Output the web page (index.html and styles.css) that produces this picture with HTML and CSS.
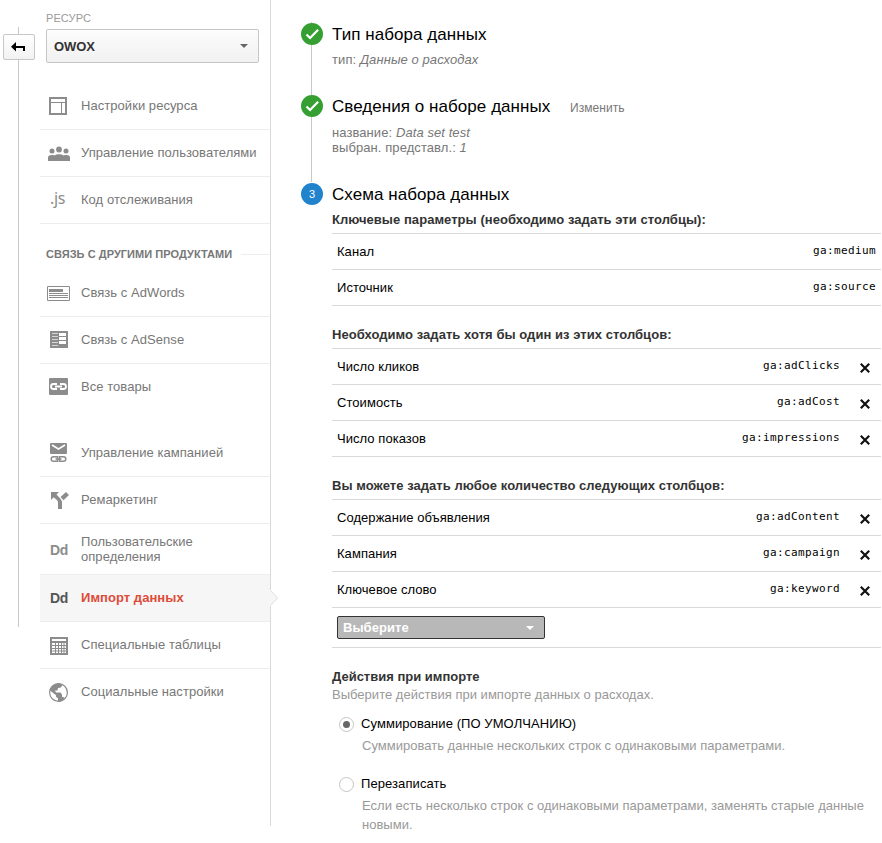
FILE: index.html
```html
<!DOCTYPE html>
<html lang="ru">
<head>
<meta charset="utf-8">
<title>Импорт данных</title>
<link rel="stylesheet" href="styles.css">
</head>
<body>
<div class="page">
  <div class="rail">
    <button class="back" aria-label="Назад"><svg width="14" height="10" viewBox="0 0 14 10"><path d="M0 4.700 5 0v4h9v5h-2V6H5v3.400z" fill="#000"/></svg></button>
  </div>
  <nav class="sidebar">
    <div class="label">РЕСУРС</div>
    <div class="picker"><span>OWOX</span><i class="caret"></i></div>
    <ul class="menu first">
      <li><span class="icon"><svg width="24" height="20" viewBox="0 0 24 20"><path d="M3 2h16v16H3z" fill="none" stroke="#8c8c8c" stroke-width="2"/><path d="M4 6.500h14M14.500 7v10" stroke="#8c8c8c" fill="none"/></svg></span><span>Настройки ресурса</span></li>
      <li><span class="icon"><svg width="24" height="20" viewBox="0 0 24 20" fill="#8c8c8c"><circle cx="12" cy="6.500" r="2.900"/><circle cx="5" cy="8" r="2.500"/><circle cx="19" cy="8" r="2.500"/><path d="M1 18v-3.500c0-2.500 4-3 6.500-2C10 10.800 14 10.800 16.700 12.500c2.500-1 6.300-.5 6.300 2V18z"/></svg></span><span>Управление пользователями</span></li>
      <li><span class="icon js">.js</span><span>Код отслеживания</span></li>
    </ul>
    <div class="section"><span>СВЯЗЬ С ДРУГИМИ ПРОДУКТАМИ</span></div>
    <ul class="menu">
      <li><span class="icon"><svg width="24" height="20" viewBox="0 0 24 20"><path d="M.5 3.500h22v14H.5z" fill="none" stroke="#8c8c8c"/><path d="M2 6h14v3H2zM2 10h19v1H2zM2 12h19v1H2zM2 14h19v1H2z" fill="#8c8c8c"/></svg></span><span>Связь с AdWords</span></li>
      <li><span class="icon"><svg width="24" height="20" viewBox="0 0 24 20"><path d="M3 1h18v17H3z" fill="#8c8c8c"/><path d="M12 3h7v3h-7zM12 7h7v3h-7zM12 11h7v3h-7z" fill="#fff"/><path d="M5 3.500h6M5 6.500h6M5 9.500h6M5 12.500h6M5 15.500h6" stroke="#d5d5d5"/></svg></span><span>Связь с AdSense</span></li>
      <li class="last"><span class="icon"><svg width="24" height="20" viewBox="0 0 24 20"><rect x="2" y="1" width="19" height="17" rx="1" fill="#8c8c8c"/><path d="M10 7H6.500a2.500 2.500 0 0 0 0 5H10M13 7h3.500a2.500 2.500 0 0 1 0 5H13M8 9.500h7" fill="none" stroke="#fff" stroke-width="1.800"/></svg></span><span>Все товары</span></li>
    </ul>
    <ul class="menu tools">
      <li><span class="icon"><svg width="24" height="20" viewBox="0 0 24 20"><rect x="3" y="0" width="17" height="11" rx="1" fill="#8c8c8c"/><path d="m5 2 6.500 4L18 2" fill="none" stroke="#fff" stroke-width="1.500"/><path d="M10.500 13.700H6.500a2.300 2.300 0 0 0 0 4.600h4zM12.500 13.700h4a2.300 2.300 0 0 1 0 4.600h-4zM8.500 16h6" fill="none" stroke="#8c8c8c" stroke-width="1.500"/></svg></span><span>Управление кампанией</span></li>
      <li><span class="icon"><svg width="24" height="20" viewBox="0 0 24 20"><path d="M4 2h8L9.500 4.500 12.300 7.500C14 9.200 15 10.500 15 12.500V19h-4v-6.200c0-1.300-.4-2-1.400-3L6.700 7.200 4 10zM13.500 7 19 2l3 3-5.500 5.200z" fill="#8c8c8c"/></svg></span><span>Ремаркетинг</span></li>
      <li class="two"><span class="icon dd">Dd</span><span>Пользовательские<br>определения</span></li>
      <li class="active"><span class="icon dd">Dd</span><span>Импорт данных</span><svg class="pointer" width="9" height="16" viewBox="0 0 9 16"><path d="M0 0h1v1l7 7-7 7v1H0z" fill="#f6f6f6"/><path d="m.8.8 6.700 7.200-6.700 7.200" fill="none" stroke="#ddd"/></svg></li>
      <li><span class="icon"><svg width="24" height="20" viewBox="0 0 24 20"><path d="M3 2h18v18H3z" fill="#8c8c8c"/><path d="M5 4h14v2H5zM5 8h3v2H5zM9 8h2v2H9zM12 8h2v2h-2zM15 8h1.500v2H15zM17.500 8H19v2h-1.500zM5 11h3v2H5zM9 11h2v2H9zM12 11h2v2h-2zM15 11h1.500v2H15zM17.500 11H19v2h-1.500zM5 14h3v1.500H5zM9 14h2v1.500H9zM12 14h2v1.500h-2zM15 14h1.500v1.500H15zM17.500 14H19v1.500h-1.500zM5 16.500h3V18H5zM9 16.500h2V18H9zM12 16.500h2V18h-2zM15 16.500h1.500V18H15zM17.500 16.500H19V18h-1.500z" fill="#fff"/></svg></span><span>Специальные таблицы</span></li>
      <li class="last"><span class="icon"><svg width="24" height="20" viewBox="0 0 24 20"><circle cx="11.500" cy="10.500" r="8.900" fill="none" stroke="#8c8c8c" stroke-width="1.200"/><path d="M3 8.500C4 4 8 1.300 13 1.500l2.500 1.300L14 5.500l-3 .5-.5 2.500H8l1 2h4.500l1.500 2v2.200l2.500.8-1.500 2.800c-2 1.500-4 1.900-5 1.700V16.500L9 14.800v-1.500z" fill="#8c8c8c"/></svg></span><span>Социальные настройки</span></li>
    </ul>
  </nav>
  <main class="content">
    <section class="step">
      <div class="track"><span class="badge done"><svg width="22" height="22" viewBox="0 0 22 22"><path d="m5.500 11.500 3.600 3.500 8-8.200" fill="none" stroke="#fff" stroke-width="2.200"/></svg></span></div>
      <div class="body s1"><h2>Тип набора данных</h2><p class="info">тип: <em>Данные о расходах</em></p></div>
    </section>
    <section class="step">
      <div class="track"><span class="badge done"><svg width="22" height="22" viewBox="0 0 22 22"><path d="m5.500 11.500 3.600 3.500 8-8.200" fill="none" stroke="#fff" stroke-width="2.200"/></svg></span></div>
      <div class="body s2"><h2>Сведения о наборе данных <a>Изменить</a></h2><p class="info">название: <em>Data set test</em><br>выбран. представл.: <em>1</em></p></div>
    </section>
    <section class="step current">
      <div class="track"><span class="badge">3</span></div>
      <div class="body">
        <h2>Схема набора данных</h2>
        <h3 class="key">Ключевые параметры (необходимо задать эти столбцы):</h3>
        <div class="table">
          <div class="row"><span>Канал</span><code>ga:medium</code></div>
          <div class="row"><span>Источник</span><code>ga:source</code></div>
        </div>
        <h3>Необходимо задать хотя бы один из этих столбцов:</h3>
        <div class="table">
          <div class="row"><span>Число кликов</span><code>ga:adClicks</code><svg class="x" width="10" height="10" viewBox="0 0 10 10"><path d="m.8.8 8.400 8.400M9.200.8.8 9.200"/></svg></div>
          <div class="row"><span>Стоимость</span><code>ga:adCost</code><svg class="x" width="10" height="10" viewBox="0 0 10 10"><path d="m.8.8 8.400 8.400M9.200.8.8 9.200"/></svg></div>
          <div class="row"><span>Число показов</span><code>ga:impressions</code><svg class="x" width="10" height="10" viewBox="0 0 10 10"><path d="m.8.8 8.400 8.400M9.200.8.8 9.200"/></svg></div>
        </div>
        <h3>Вы можете задать любое количество следующих столбцов:</h3>
        <div class="table">
          <div class="row"><span>Содержание объявления</span><code>ga:adContent</code><svg class="x" width="10" height="10" viewBox="0 0 10 10"><path d="m.8.8 8.400 8.400M9.200.8.8 9.200"/></svg></div>
          <div class="row"><span>Кампания</span><code>ga:campaign</code><svg class="x" width="10" height="10" viewBox="0 0 10 10"><path d="m.8.8 8.400 8.400M9.200.8.8 9.200"/></svg></div>
          <div class="row"><span>Ключевое слово</span><code>ga:keyword</code><svg class="x" width="10" height="10" viewBox="0 0 10 10"><path d="m.8.8 8.400 8.400M9.200.8.8 9.200"/></svg></div>
          <div class="row choose"><div class="select"><span>Выберите</span><i class="caret"></i></div></div>
        </div>
        <h3 class="import">Действия при импорте</h3>
        <p class="hint">Выберите действия при импорте данных о расходах.</p>
        <div class="option"><span class="radio on"></span><div><div class="name">Суммирование (ПО УМОЛЧАНИЮ)</div><p>Суммировать данные нескольких строк с одинаковыми параметрами.</p></div></div>
        <div class="option"><span class="radio"></span><div><div class="name">Перезаписать</div><p>Если есть несколько строк с одинаковыми параметрами, заменять старые данные новыми.</p></div></div>
      </div>
    </section>
  </main>
</div>
</body>
</html>
```
FILE: styles.css
```css
* { box-sizing: border-box; }
body { margin: 0; background: #fff; font: 13px/15px "Liberation Sans", Arial, sans-serif; letter-spacing: .05px; color: #000; overflow: hidden; }
h2, h3, p, ul { margin: 0; padding: 0; }
.page { display: flex; align-items: flex-start; height: 843px; }

.rail { width: 40px; flex: none; height: 600px; margin-top: 27px; padding: 7px 0 0 3px; background: linear-gradient(#c8c8c8, #c8c8c8) 18px 0 / 1px 100% no-repeat; }
.back { display: flex; align-items: center; justify-content: center; width: 32px; height: 26px; padding: 0 2px 0 0; border: 1px solid #c6c6c6; border-radius: 2px; background: linear-gradient(#fff, #f2f2f2); }

.sidebar { width: 231px; flex: none; height: 826px; padding-top: 11px; border-right: 1px solid #d9d9d9; color: #777; }
.label { margin-left: 6px; font-size: 11px; height: 18px; line-height: 15px; letter-spacing: .1px; color: #999; }
.picker { display: flex; align-items: center; justify-content: space-between; width: 213px; height: 34px; margin-left: 6px; padding: 0 10px 0 7px; border: 1px solid #c6c6c6; border-radius: 2px; background: linear-gradient(#fcfcfc, #f1f1f1); color: #333; font-weight: bold; }
.picker span { letter-spacing: -.1px; }
.caret { width: 0; height: 0; border: 4px solid transparent; border-top-color: #666; border-bottom: 0; }
.menu { list-style: none; }
.first { margin-top: 20px; }
.menu li { position: relative; display: flex; align-items: center; height: 47px; padding: 0 0 1px 7px; border-bottom: 1px solid #ededed; }
.menu li.last { border-color: transparent; }
.icon { display: flex; flex: none; width: 24px; height: 20px; margin-right: 10px; align-items: center; }
.js { padding: 0 0 4px 3px; font: 16px/20px "Noto Sans", sans-serif; letter-spacing: -.3px; color: #8c8c8c; }
.dd { padding: 1px 0 0 3px; font: bold 14px/18px "Liberation Sans", Arial, sans-serif; letter-spacing: -.4px; color: #8c8c8c; }
.section { display: flex; align-items: center; height: 15px; margin: 23px 0 8px 6px; font-size: 11px; font-weight: bold; }
.section::after { content: ""; flex: 1; height: 1px; margin-left: 9px; background: #ededed; }
.tools { margin-top: 19px; }
.menu .two { height: 51px; padding-bottom: 0; }
.menu .active { background: #f6f6f6; color: #dd4b39; font-weight: bold; }
.active .dd { color: #555; }
.pointer { position: absolute; left: 230px; top: 15px; }

.content { width: 580px; margin-left: 30px; padding-top: 22px; }
.step { display: flex; }
.track { width: 22px; flex: none; margin-right: 9px; padding-top: 1px; background: linear-gradient(#c8c8c8, #c8c8c8) 10px 0 / 1px 100% no-repeat; }
.current .track { background: none; }
.badge { display: flex; align-items: center; justify-content: center; width: 22px; height: 22px; border-radius: 50%; background: #2083cc; color: #fff; font-size: 11px; }
.done { background: #35a031; }
.body { width: 549px; }
.s1 { height: 72px; }
.s2 { height: 88px; }
h2 { padding-top: 1px; font-size: 17px; line-height: 24px; font-weight: normal; }
h2 a { margin-left: 15px; font-size: 12px; color: #777; }
.info { margin-top: 5px; letter-spacing: .08px; color: #777; }
h3 { font-size: 13px; line-height: 15px; color: #333; margin: 21px 0 6px; }
.key { margin: 5px 0 6px; }
.table { border-top: 1px solid #d9d9d9; }
.row { display: flex; align-items: center; height: 36px; padding: 0 5px; border-bottom: 1px solid #d9d9d9; }
code { margin-left: auto; padding-bottom: 3px; font: 11px/15px "DejaVu Sans Mono", monospace; letter-spacing: .38px; }
.x { margin: 3px 6px 0 20px; stroke: #111; stroke-width: 2.2; fill: none; }
.choose { height: 40px; }
.select { display: flex; align-items: center; justify-content: space-between; width: 208px; height: 23px; padding: 0 10px 0 5px; border: 1px solid #333; border-radius: 2px; background: #b8b8b8; color: #fff; font-weight: bold; }
.select .caret { border-top-color: #fff; }
h3.import { margin: 21px 0 0; letter-spacing: 0; }
.hint { padding-top: 1px; line-height: 20px; letter-spacing: .02px; color: #999; }
.option { display: flex; height: 60px; margin-left: 7px; }
.hint + .option { margin-top: 11px; }
.radio { display: flex; align-items: center; justify-content: center; width: 15px; height: 15px; flex: none; margin: 1px 7px 0 0; border: 1px solid #c6c6c6; border-radius: 50%; }
.on::after { content: ""; width: 7px; height: 7px; border-radius: 50%; background: #666; }
.name { letter-spacing: .08px; }
.option p { margin: 5px 0 0 1px; line-height: 19px; letter-spacing: .015px; color: #999; }
```
